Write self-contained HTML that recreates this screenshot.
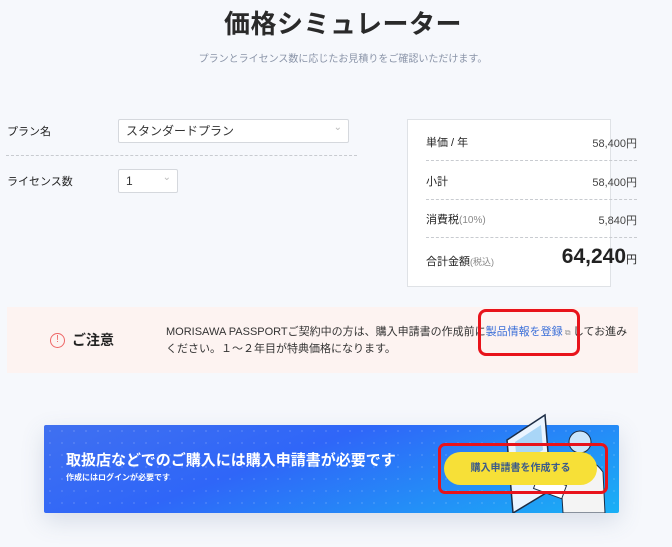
<!DOCTYPE html>
<html><head><meta charset="utf-8"><style>
*{box-sizing:border-box;margin:0;padding:0}
body{width:672px;height:547px;background:#f6f8fc;font-family:"Liberation Sans","Noto Sans CJK JP",sans-serif;color:#222;position:relative;overflow:hidden}
.a{position:absolute}
.sel{background:#fff;border:1px solid #d5d8dd;border-radius:2px;font-size:12px;padding-left:7px;line-height:22px;color:#333}
.sel:after{content:"⌄";position:absolute;right:6px;top:-3px;color:#bbb;font-size:10px}
.dash{border-top:1px dashed #c8cbd0}
.lbl{font-size:11px;color:#222}
.val{font-size:11px;color:#444;text-align:right}
</style></head><body>
<div class="a" style="left:0;width:686px;top:4px;text-align:center;font-size:26px;font-weight:bold;letter-spacing:0.5px;color:#2a2a2a">価格シミュレーター</div>
<div class="a" style="left:0;width:686px;top:50px;text-align:center;font-size:10px;color:#8a94a8">プランとライセンス数に応じたお見積りをご確認いただけます。</div>

<div class="a lbl" style="left:7px;top:123px">プラン名</div>
<div class="a sel" style="left:118px;top:119px;width:231px;height:24px">スタンダードプラン</div>
<div class="a dash" style="left:6px;top:155px;width:351px"></div>
<div class="a lbl" style="left:7px;top:173px">ライセンス数</div>
<div class="a sel" style="left:118px;top:169px;width:60px;height:24px">1</div>

<div class="a" style="left:407px;top:119px;width:204px;height:168px;background:#fff;border:1px solid #dfe2e6"></div>
<div class="a lbl" style="left:426px;top:134px">単価 / 年</div><div class="a val" style="left:520px;width:117px;top:135px">58,400円</div>
<div class="a dash" style="left:426px;top:160px;width:211px"></div>
<div class="a lbl" style="left:426px;top:173px">小計</div><div class="a val" style="left:520px;width:117px;top:174px">58,400円</div>
<div class="a dash" style="left:426px;top:199px;width:211px"></div>
<div class="a lbl" style="left:426px;top:211px">消費税<span style="color:#888;font-size:10px">(10%)</span></div><div class="a val" style="left:520px;width:117px;top:212px">5,840円</div>
<div class="a dash" style="left:426px;top:237px;width:211px"></div>
<div class="a lbl" style="left:426px;top:253px">合計金額<span style="color:#888;font-size:9px">(税込)</span></div>
<div class="a" style="left:520px;width:117px;top:245px;text-align:right;font-size:21px;font-weight:bold;color:#222">64,240<span style="font-size:11px;font-weight:normal">円</span></div>

<div class="a" style="left:7px;top:307px;width:631px;height:66px;background:#fdf3f1"></div>
<div class="a" style="left:50px;top:333px;width:15px;height:15px;border:1.5px solid #e66;border-radius:50%;color:#e66;font-size:10px;text-align:center;line-height:12px">!</div>
<div class="a" style="left:72px;top:330px;font-size:14px;font-weight:bold">ご注意</div>
<div class="a" style="left:166px;top:324px;width:480px;font-size:11px;line-height:17px;color:#333;white-space:nowrap">MORISAWA PASSPORTご契約中の方は、購入申請書の作成前に<span style="color:#3b6fd8">製品情報を登録</span><span style="color:#999;font-size:8px"> ⧉ </span>してお進み<br>ください。１～２年目が特典価格になります。</div>
<div class="a" style="left:478px;top:309px;width:102px;height:47px;border:3px solid #e8131b;border-radius:8px"></div>

<div class="a" style="left:44px;top:425px;width:575px;height:88px;border-radius:2px;box-shadow:0 8px 24px rgba(80,100,140,.18);background-image:radial-gradient(rgba(255,255,255,.18) 0.7px,transparent 1px),linear-gradient(160deg,#4070f0 0%,#2f66f8 40%,#1ab0f6 100%);background-size:12px 12px,100% 100%"></div>
<svg class="a" style="left:495px;top:410px" width="124" height="103" viewBox="0 0 124 103"><polygon points="12,30 50,5 56,80 18,103" fill="#eaf4ff" stroke="#1c2c44" stroke-width="1.5"/><polygon points="20,32 46,15 48,40 22,55" fill="#a9d6f7"/><circle cx="85" cy="32" r="11" fill="#cbe6fb" stroke="#1c2c44"/><path d="M65 55 Q92 40 108 62 L110 103 L68 103Z" fill="#f4f4f4" stroke="#1c2c44"/><rect x="40" y="70" width="30" height="14" fill="#fff" stroke="#1c2c44" transform="rotate(20 55 77)"/></svg>
<div class="a" style="left:66px;top:449px;font-size:15px;font-weight:bold;color:#fff">取扱店などでのご購入には購入申請書が必要です</div>
<div class="a" style="left:66px;top:472px;font-size:8px;font-weight:bold;color:#fff">作成にはログインが必要です</div>
<div class="a" style="left:444px;top:452px;width:153px;height:33px;background:#f7e037;border-radius:17px;text-align:center;line-height:33px;font-size:10px;font-weight:bold;color:#3a5a8a">購入申請書を作成する</div>
<div class="a" style="left:438px;top:443px;width:170px;height:51px;border:3px solid #e8131b;border-radius:7px"></div>
</body></html>
